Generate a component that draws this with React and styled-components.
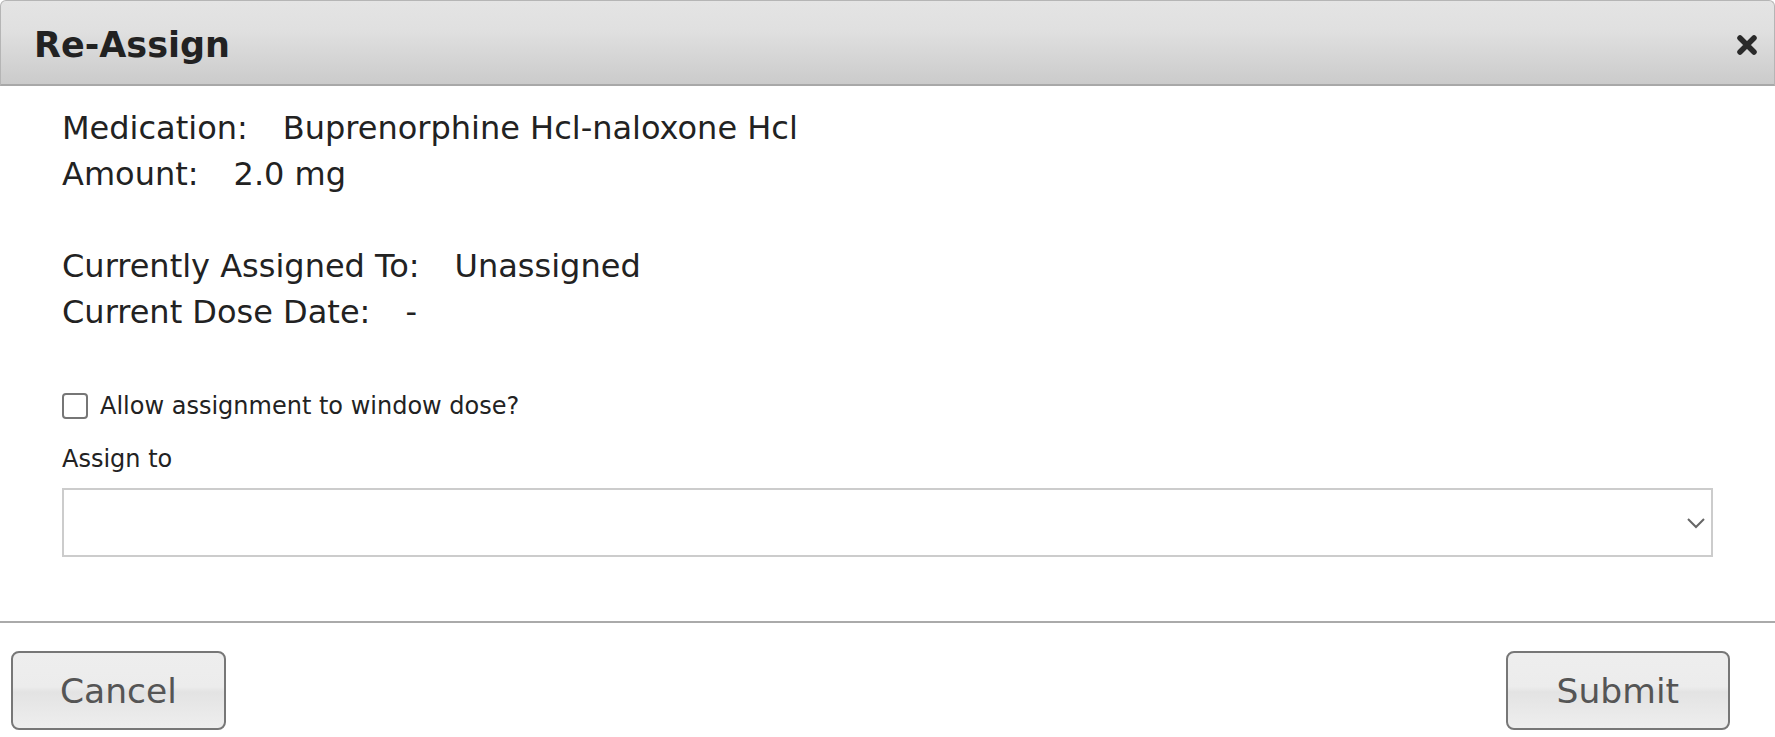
import styled, { createGlobalStyle } from "styled-components";

const GlobalStyle = createGlobalStyle`
  html, body {
    margin: 0;
    padding: 0;
    background: #fff;
  }
  body {
    font-family: "DejaVu Sans", Verdana, sans-serif;
    color: #222;
  }
`;

const Dialog = styled.div`
  width: 1775px;
  height: 737px;
  display: flex;
  flex-direction: column;
  background: #fff;
  overflow: hidden;
`;

const Header = styled.div`
  height: 86px;
  box-sizing: border-box;
  display: flex;
  align-items: center;
  justify-content: space-between;
  padding: 4px 16px 0 33px;
  background: linear-gradient(#e4e4e4 0%, #e0e0e0 35%, #cbcbcb 100%);
  border: 1px solid #b5b5b5;
  border-bottom: 2px solid #a8a8a8;
  border-radius: 6px 6px 0 0;
`;

const Title = styled.h1`
  margin: 0;
  font-size: 35px;
  font-weight: bold;
  color: #222;
`;

const CloseButton = styled.button`
  border: 0;
  background: none;
  padding: 0;
  display: flex;
  cursor: pointer;
`;

const Body = styled.div`
  padding: 19px 62px 64px 62px;
  border-bottom: 2px solid #aaa;
`;

const InfoBlock = styled.div`
  font-size: 32px;
  line-height: 46px;
  color: #222;
`;

const InfoRow = styled.div`
  display: flex;
  gap: 35px;
  margin-top: ${(p) => (p.$spaced ? "46px" : "0")};
`;

const CheckRow = styled.label`
  display: flex;
  align-items: center;
  gap: 12px;
  margin-top: 56px;
  font-size: 24px;
  line-height: 30px;
  color: #222;
`;

const CheckBox = styled.span`
  width: 22px;
  height: 22px;
  border: 2px solid #767676;
  border-radius: 4px;
  background: #fff;
`;

const FieldLabel = styled.div`
  margin-top: 23px;
  font-size: 24px;
  line-height: 30px;
  color: #222;
`;

const Select = styled.div`
  margin-top: 14px;
  height: 69px;
  border: 2px solid #cccccc;
  box-sizing: border-box;
  display: flex;
  align-items: center;
  justify-content: flex-end;
  padding-right: 5px;
`;

const Footer = styled.div`
  display: flex;
  justify-content: space-between;
  padding: 28px 45px 0 11px;
`;

const Button = styled.button`
  height: 79px;
  padding: 0 ${(p) => p.$pad}px;
  font-family: "DejaVu Sans", Verdana, sans-serif;
  font-size: 34.5px;
  color: #555;
  border: 2px solid #777;
  border-radius: 8px;
  background: linear-gradient(#eeeeee 0%, #ececec 45%, #e3e3e3 52%, #eeeeee 100%);
  cursor: pointer;
`;

const XIcon = () => (
  <svg width="22" height="22" viewBox="0 0 22 22">
    <path d="M4 4 L18 18 M18 4 L4 18" stroke="#2a2a2a" strokeWidth="5.5" strokeLinecap="round" />
  </svg>
);

const Chevron = () => (
  <svg width="20" height="12" viewBox="0 0 20 12">
    <path d="M2 2 L10 10 L18 2" fill="none" stroke="#666" strokeWidth="2" />
  </svg>
);

const App = () => {
  return (
    <Dialog>
      <GlobalStyle />
      <Header>
        <Title>Re-Assign</Title>
        <CloseButton aria-label="close">
          <XIcon />
        </CloseButton>
      </Header>
      <Body>
        <InfoBlock>
          <InfoRow>
            <span>Medication:</span>
            <span>Buprenorphine Hcl-naloxone Hcl</span>
          </InfoRow>
          <InfoRow>
            <span>Amount:</span>
            <span>2.0 mg</span>
          </InfoRow>
          <InfoRow $spaced>
            <span>Currently Assigned To:</span>
            <span>Unassigned</span>
          </InfoRow>
          <InfoRow>
            <span>Current Dose Date:</span>
            <span>-</span>
          </InfoRow>
        </InfoBlock>
        <CheckRow>
          <CheckBox />
          Allow assignment to window dose?
        </CheckRow>
        <FieldLabel>Assign to</FieldLabel>
        <Select>
          <Chevron />
        </Select>
      </Body>
      <Footer>
        <Button $pad={47}>Cancel</Button>
        <Button $pad={49}>Submit</Button>
      </Footer>
    </Dialog>
  );
};

export default App;
